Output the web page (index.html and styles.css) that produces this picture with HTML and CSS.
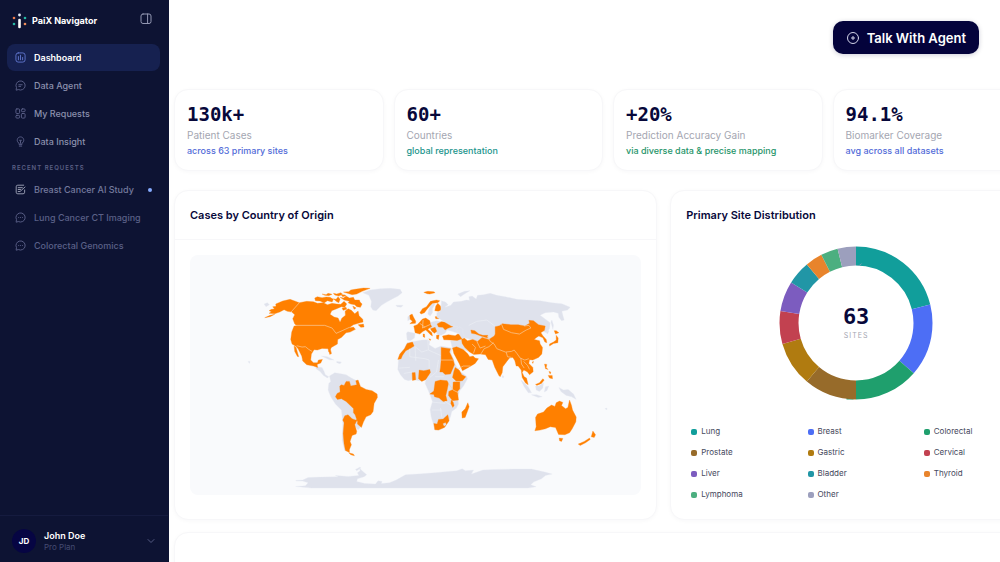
FILE: index.html
```html
<!DOCTYPE html>
<html lang="en">
<head>
<meta charset="utf-8">
<meta name="viewport" content="width=device-width, initial-scale=1">
<title>PaiX Navigator</title>
<link rel="stylesheet" href="styles.css">
</head>
<body>
<div class="app">
  <aside class="sidebar">
    <div class="brand">
      <svg class="brand-logo" viewBox="0 0 16 16" aria-hidden="true">
        <path d="M7.5 7v7" stroke="#fff" stroke-width="2.6" stroke-linecap="round"/>
        <circle cx="7.500" cy="2" r="1.400" fill="#e6f1ff"/>
        <circle cx="2" cy="5" r="1.300" fill="#ee7c4b"/>
        <circle cx="13" cy="5" r="1.300" fill="#25b8a5"/>
        <circle cx="2" cy="11" r="1.300" fill="#25b8a5"/>
        <circle cx="13" cy="11" r="1.300" fill="#ee8d5b"/>
      </svg>
      <span class="brand-name">PaiX Navigator</span>
      <button class="icon-button" type="button" aria-label="Collapse sidebar">
        <svg viewBox="0 0 12 12"><rect x="1" y="1" width="10" height="9.500" rx="2"/><path d="M7.600 1v9.500"/></svg>
      </button>
    </div>
    <nav class="nav" aria-label="Main">
      <a class="nav-item active" href="#dashboard">
        <svg viewBox="0 0 12 12"><rect x="1" y="1" width="10" height="10" rx="2.500"/><path d="M3.700 5v3.500M6 3.500v5M8.300 6v2.500"/></svg>Dashboard</a>
      <a class="nav-item" href="#agent">
        <svg viewBox="0 0 12 12"><path d="M1.300 10.700l.3-2.400A5 5 0 1 1 4 10.600zM4.200 5.200h3.600M4.200 7h2"/></svg>Data Agent</a>
      <a class="nav-item" href="#requests">
        <svg viewBox="0 0 12 12"><rect x="1" y="1" width="4" height="5" rx="1"/><rect x="7" y="1" width="4" height="3" rx="1"/><rect x="1" y="8" width="4" height="3" rx="1"/><rect x="7" y="6" width="4" height="5" rx="1"/></svg>My Requests</a>
      <a class="nav-item" href="#insight">
        <svg viewBox="0 0 12 12"><path d="M4.500 9V8C1 6 2.300 1 6 1s5 5 1.500 7v1zM4.700 11h2.600M6 8V5.500M5 4.700h2"/></svg>Data Insight</a>
    </nav>
    <h2 class="nav-heading">Recent Requests</h2>
    <nav class="nav recent" aria-label="Recent requests">
      <a class="nav-item current" href="#breast">
        <svg viewBox="0 0 12 12"><path d="M10.500 6.500V9A1.700 1.700 0 0 1 8.800 10.700H3A1.700 1.700 0 0 1 1.300 9V3A1.700 1.700 0 0 1 3 1.300h6.500M3.500 4h4.500M3.500 6h2.500M3.500 8.200h2L10.900 3.300"/></svg>Breast Cancer AI Study<span class="dot"></span></a>
      <a class="nav-item" href="#lung">
        <svg viewBox="0 0 12 12"><path d="M1.300 10.700l.3-2.400A5 5 0 1 1 4 10.600zM4 6h.1M6 6h.1M8 6h.1"/></svg>Lung Cancer CT Imaging</a>
      <a class="nav-item" href="#colorectal">
        <svg viewBox="0 0 12 12"><path d="M1.300 10.700l.3-2.400A5 5 0 1 1 4 10.600zM4 6h.1M6 6h.1M8 6h.1"/></svg>Colorectal Genomics</a>
    </nav>
    <button class="account" type="button">
      <span class="avatar">JD</span>
      <span class="account-text"><strong>John Doe</strong><span>Pro Plan</span></span>
      <svg viewBox="0 0 8 8" aria-hidden="true"><path d="M1 2.500l3 3 3-3"/></svg>
    </button>
  </aside>

  <main class="main">
    <header class="topbar">
      <button class="talk" type="button">
        <svg viewBox="0 0 14 14" aria-hidden="true"><circle cx="7" cy="7" r="5.500"/><path d="M7 5.400v3.200M5.400 7h3.200"/></svg>
        Talk With Agent
      </button>
    </header>
    <div class="content">
      <section class="stats" aria-label="Key figures">
        <article class="card stat"><strong>130k+</strong><span class="label">Patient Cases</span><span class="note blue">across 63 primary sites</span></article>
        <article class="card stat"><strong>60+</strong><span class="label">Countries</span><span class="note teal">global representation</span></article>
        <article class="card stat"><strong>+20%</strong><span class="label">Prediction Accuracy Gain</span><span class="note green">via diverse data &amp; precise mapping</span></article>
        <article class="card stat"><strong>94.1%</strong><span class="label">Biomarker Coverage</span><span class="note blue">avg across all datasets</span></article>
      </section>

      <div class="panels">
        <section class="card panel">
          <h2 class="panel-title ruled">Cases by Country of Origin</h2>
          <div class="map-frame">
          <svg class="map" viewBox="190 255 451 240" role="img" aria-label="World map of case origins">
            <!-- Americas -->
            <g transform="translate(240 280) scale(.33333)">
              <path class="land" d="M368 38L390 30L420 26L450 25L480 28L486 38L474 48L458 56L440 66L424 76L408 92L398 90L392 80L394 64L386 46ZM72 72L82 68L88 74L78 80ZM24 244L30 244L28 250ZM244 228L262 230L282 240L268 239ZM290 244L304 246L300 251L290 248Z"/>
              <path class="land" d="M228 260L246 262L252 274L256 284L266 290L262 294L250 286L240 274L228 266ZM268 288L284 278L298 280L318 284L334 294L350 302L356 320L340 370L350 400L356 412L350 424L362 440L354 450L344 438L334 460L322 514L314 512L306 480L308 430L304 390L286 372L272 350L264 330L266 310L272 304Z"/>
              <path class="case" d="M87 92L94 88L103 87L98 80L108 79L107 72L128 63L150 58L178 68L200 64L220 65L232 70L250 68L262 74L276 70L290 72L302 73L312 64L320 72L314 82L304 80L290 86L275 92L270 103L282 111L294 114L300 127L305 115L316 106L315 94L324 86L334 91L344 101L354 93L357 107L368 118L369 126L355 130L340 134L326 144L340 141L346 148L330 156L318 158L304 172L293 178L292 192L274 202L271 208L273 222L266 216L264 206L246 205L232 210L222 209L214 222L212 240L220 248L232 248L235 240L247 238L242 249L231 253L233 262L220 258L200 254L188 243L185 228L174 206L168 199L156 192L152 178L155 156L162 138L170 137L164 132L158 116L164 104L155 96L142 94L132 89L119 96L104 101L87 100L94 95ZM162 198L168 202L176 230L172 229L164 214ZM104 103L90 110L74 113L90 106ZM354 134L370 132L372 141L362 142ZM270 205L274 220L269 223L266 208Z"/>
              <path class="case" d="M224 54L232 50L246 53L258 51L270 52L280 58L276 66L262 62L252 69L240 63L226 62ZM246 42L258 44L264 40L276 43L266 47L254 46ZM280 56L288 58L294 50L300 58L296 68L288 64ZM300 52L310 54L318 48L328 54L340 52L344 60L358 60L360 66L366 72L361 82L350 80L344 74L332 72L324 68L328 64L312 60ZM280 40L290 42L302 38L308 43L296 48L284 45ZM304 46L312 44L318 47L308 50ZM310 36L326 35L332 30L344 28L370 24L390 25L366 34L350 42L336 44L322 40ZM306 84L318 82L320 88L309 91ZM338 78L348 84L342 88Z"/>
              <path class="case" d="M286 350L291 340L300 336L299 318L304 314L312 316L318 304L328 304L332 318L350 314L347 302L354 300L361 319L378 328L396 332L411 342L412 352L402 370L399 394L392 404L378 410L370 426L364 442L352 432L352 424L345 404L340 398L340 385L326 372L318 364L304 356L292 358ZM314 407L324 404L336 416L346 420L352 418L344 434L350 454L348 462L336 466L330 484L334 494L328 508L328 517L316 511L312 492L309 460L312 428L308 420ZM326 518L340 522L343 527L332 524Z"/>
              <path class="border" d="M178 68L153 96M166 136L254 136L276 144L288 160L306 152L328 142M170 197L186 201L196 200L206 208L216 214"/>
              <path class="land" d="M346 568L360 561L362 564L350 572Z"/>
            </g>
            <!-- Africa, Europe and the Middle East -->
            <g transform="translate(395 280) scale(.33333)">
              <path class="land" d="M36 188L56 184L80 180L98 179L104 184L102 194L120 205L138 198L170 204L168 220L180 252L192 272L214 288L217 296L205 318L194 332L188 350L190 372L184 384L170 394L166 410L160 424L150 440L132 450L118 449L116 436L108 410L105 388L112 364L104 342L96 324L90 310L92 300L72 302L54 298L40 302L28 298L16 284L8 268L10 240L22 216Z"/>
              <path class="land" d="M34 160L38 155L60 160L58 174L46 182L36 180ZM90 130L110 126L124 122L136 124L174 132L200 140L205 162L188 160L170 154L156 150L150 160L138 166L128 164L118 150L100 144ZM100 92L104 80L112 68L120 72L112 86L112 98L105 108L98 102ZM2 76L24 76L18 82L6 80ZM38 110L44 106L46 118L38 122ZM188 42L208 34L224 32L208 42L196 50ZM166 182L198 178L218 214L200 206L172 206Z"/>
              <path class="case" d="M86 37L98 34L116 35L120 38L104 42L96 41ZM74 98L82 86L94 80L106 64L124 60L134 62L128 68L112 70L104 78L94 90L88 98L78 102ZM122 78L128 70L136 78L139 90L130 94L119 92ZM120 110L132 108L132 116L122 116ZM44 106L51 102L55 111L62 124L61 130L44 131L52 124L45 118ZM56 138L66 134L74 126L82 117L92 114L104 122L106 133L110 140L104 143L98 148L110 158L112 168L106 164L96 154L92 150L84 154L74 162L60 158L58 148ZM106 146L120 142L125 154L118 160L110 154ZM126 132L138 125L154 126L172 132L173 140L158 145L150 150L143 142L130 141ZM84 162L88 162L89 172L84 170ZM101 176L107 178L105 181ZM124 166L132 165L130 178L124 175ZM142 168L160 164L180 167L188 162L200 164L202 176L186 181L166 180L146 179Z"/>
              <path class="case" d="M8 238L14 222L28 206L36 190L52 186L57 198L44 206L32 212L22 226L18 236ZM51 278L60 277L62 299L52 301ZM72 270L86 272L104 268L106 277L92 298L80 304L70 296ZM138 202L166 206L163 216L174 238L178 254L166 282L150 283L142 276L134 276L136 262L138 240ZM180 262L192 270L200 284L212 290L202 302L184 304L172 292L176 274ZM120 304L136 300L156 302L160 310L156 330L152 346L156 362L144 364L132 354L118 350L116 343L104 342L116 333ZM174 306L194 304L194 326L187 334L190 360L172 362L160 346L161 334L173 328ZM168 360L174 366L177 376L173 382L167 371ZM116 430L126 432L130 418L144 417L158 404L162 422L148 442L130 450L119 449ZM218 368L222 380L210 412L201 414L200 396L210 386ZM172 204L184 200L204 208L217 220L224 230L234 228L240 234L250 236L240 250L220 262L202 272L192 250L176 220Z"/>
              <path class="land" d="M144 431L151 428L153 434L147 438Z"/>
              <path class="border" d="M138 240L174 240M190 266L204 258L226 258M84 120L82 144L106 133M74 130L90 142M160 310L174 330L190 338M180 304L196 304"/>
              <path class="border pale" d="M60 200L80 216L98 210M98 180L100 210L136 226M44 206L44 230L60 232L90 236L102 240M60 200L62 242M102 240L102 266M12 264L44 262M130 240L124 276L104 292M120 290L146 290M110 366L150 370M110 390L140 390M136 384L140 412M150 364L168 376M26 280L50 276"/>
            </g>
            <!-- Asia and Oceania -->
            <g transform="translate(490 280) scale(.33333)">
              <path class="land" d="M-146 62L-134 66L-126 74L-136 82L-118 76L-110 66L-86 64L-72 60L-62 61L-64 50L-54 48L-42 57L-38 46L-20 44L0 40L20 46L45 50L80 58L110 60L150 62L185 68L215 71L240 82L232 90L215 94L218 106L222 120L214 122L206 112L204 100L190 96L165 98L150 106L166 118L180 128L178 146L168 158L150 150L0 200L-30 186L-66 176L-82 172L-84 152L-96 140L-116 138L-140 124L-160 112L-160 98L-148 92Z"/>
              <path class="case" d="M15 140L28 137L36 131L62 134L84 134L104 138L118 130L116 121L130 122L145 134L165 138L163 151L152 158L158 167L168 178L170 188L164 186L158 173L146 168L138 173L132 178L148 182L150 192L157 202L155 222L145 232L128 240L118 239L116 250L128 262L129 275L118 284L112 276L101 270L96 277L102 290L109 294L114 314L106 309L96 292L93 270L84 258L78 258L74 242L68 232L58 234L50 244L38 260L36 278L30 290L26 286L14 262L6 240L-6 238L-14 224L-30 222L-49 223L-62 216L-76 202L-84 190L-86 176L-78 174L-68 182L-52 178L-38 184L-24 172L-4 178L12 168L15 162ZM-58 150L-46 152L-34 162L-22 166L-7 166L-8 174L-28 168L-44 162L-56 160Z"/>
              <path class="case" d="M192 152L198 152L206 158L196 162ZM198 166L204 174L203 188L190 190L178 198L178 192L190 186L198 180ZM126 246L130 244L128 250ZM163 252L170 253L168 263L174 268L166 266ZM174 286L186 286L187 296L178 294ZM176 274L182 276L180 282ZM136 313L148 308L158 296L162 300L154 310L140 316ZM134 452L138 440L136 412L142 402L160 396L170 384L184 375L194 379L198 368L208 363L218 367L214 376L226 386L233 382L238 360L244 376L247 390L258 411L257 425L246 446L238 458L224 464L205 463L196 442L180 440L166 446L150 450ZM207 474L218 475L214 484L208 482ZM308 453L316 464L312 472L303 470ZM264 492L282 484L298 474L300 478L286 488L270 496Z"/>
              <path class="land" d="M-102 148L-92 140L-82 146L-82 160L-76 172L-84 176L-92 164ZM92 300L102 308L114 320L124 338L114 338L102 320ZM124 344L140 344L156 350L144 352ZM136 318L146 318L160 308L158 324L148 334L138 330ZM166 320L176 318L170 332L162 336ZM206 322L220 330L234 328L250 342L258 358L244 350L228 346L212 334ZM36 286L41 288L40 293L36 292ZM344 386L350 384L350 389ZM168 158L174 150L176 154L172 162ZM182 126L185 120L190 136L188 148Z"/>
              <path class="border" d="M34 132L40 148L64 158L88 162L108 150L122 144L116 136L102 138M0 184L12 192L20 206L46 216L64 214L72 210L80 220L90 234L104 240L116 236M92 234L94 252L102 264M100 244L112 256L118 268M-28 222L-18 206L-4 200L10 188M-50 220L-44 202L-54 192M-40 184L-30 204L-14 198M48 216L52 230L64 232M0 184L-8 168"/>
              <path class="border pale" d="M-64 136L-40 124L-10 120L14 138"/>
            </g>
            <!-- Antarctica -->
            <g transform="translate(168 440) scale(.33333)">
              <path class="land" d="M383 121L404 120L420 112L458 111L510 110L502 106L540 109L572 106L568 98L576 92L574 84L582 92L596 104L588 110L568 116L566 124L590 130L622 132L630 122L642 124L640 130L664 128L684 120L712 104L760 101L800 98L840 94L866 92L882 86L892 92L916 90L910 102L944 90L980 88L1034 87L1090 87L1130 96L1152 102L1132 106L1120 116L1096 126L1088 134L1104 140L1080 144L430 144L383 139L412 137L420 128L404 123L384 123Z"/>
            </g>
          </svg>
          </div>
        </section>

        <section class="card panel">
          <h2 class="panel-title">Primary Site Distribution</h2>
          <div class="donut">
            <svg viewBox="0 0 154 154" aria-hidden="true">
              <g transform="rotate(-90 77 77)" fill="none" stroke-width="19">
                <circle cx="77" cy="77" r="67" pathLength="360" stroke="#119e9b" stroke-dasharray="76 284"/>
                <circle cx="77" cy="77" r="67" pathLength="360" stroke="#4d6ef5" stroke-dasharray="55 305" stroke-dashoffset="-76"/>
                <circle cx="77" cy="77" r="67" pathLength="360" stroke="#1f9f6d" stroke-dasharray="49 311" stroke-dashoffset="-131"/>
                <circle cx="77" cy="77" r="67" pathLength="360" stroke="#976b2a" stroke-dasharray="40 320" stroke-dashoffset="-180"/>
                <circle cx="77" cy="77" r="67" pathLength="360" stroke="#b07b10" stroke-dasharray="34 326" stroke-dashoffset="-220"/>
                <circle cx="77" cy="77" r="67" pathLength="360" stroke="#c24150" stroke-dasharray="25 335" stroke-dashoffset="-254"/>
                <circle cx="77" cy="77" r="67" pathLength="360" stroke="#7c5cbf" stroke-dasharray="23 337" stroke-dashoffset="-279"/>
                <circle cx="77" cy="77" r="67" pathLength="360" stroke="#2196a6" stroke-dasharray="18 342" stroke-dashoffset="-302"/>
                <circle cx="77" cy="77" r="67" pathLength="360" stroke="#e8842c" stroke-dasharray="13 347" stroke-dashoffset="-320"/>
                <circle cx="77" cy="77" r="67" pathLength="360" stroke="#4caf80" stroke-dasharray="13 347" stroke-dashoffset="-333"/>
                <circle cx="77" cy="77" r="67" pathLength="360" stroke="#9c9fbd" stroke-dasharray="14 346" stroke-dashoffset="-346"/>
              </g>
            </svg>
            <div class="donut-text"><strong>63</strong><span>SITES</span></div>
          </div>
          <ul class="legend">
            <li class="c-lung">Lung</li><li class="c-breast">Breast</li><li class="c-colorectal">Colorectal</li>
            <li class="c-prostate">Prostate</li><li class="c-gastric">Gastric</li><li class="c-cervical">Cervical</li>
            <li class="c-liver">Liver</li><li class="c-bladder">Bladder</li><li class="c-thyroid">Thyroid</li>
            <li class="c-lymphoma">Lymphoma</li><li class="c-other">Other</li>
          </ul>
        </section>
      </div>
      <section class="card next-panel" aria-label="More"></section>
    </div>
  </main>
</div>
</body>
</html>
```
FILE: styles.css
```css
* { box-sizing: border-box; margin: 0; }
body { font-family: Inter, "Liberation Sans", sans-serif; font-size: 10px; color: #07083a; background: #fff; }
button { font: inherit; border: 0; background: none; color: inherit; padding: 0; }
.app { display: flex; height: 100vh; overflow: hidden; }

.sidebar { flex: 0 0 168px; display: flex; flex-direction: column; background: #0d1333; color: #7f84a4; border-right: 1px solid #0d1333; box-sizing: content-box; width: 168px; margin-right: -1px; }
.sidebar svg { fill: none; stroke: currentColor; stroke-linecap: round; stroke-linejoin: round; }
.brand { display: flex; align-items: center; height: 41px; padding: 0 16px 0 12px; }
.brand .brand-logo { width: 16px; height: 16px; stroke: none; }
.brand-name { flex: 1; margin-left: 4px; font-size: 9px; font-weight: 700; color: #fff; }
.icon-button { width: 12px; height: 12px; margin-bottom: 4px; color: #9297b2; }
.icon-button svg { display: block; width: 12px; height: 12px; }
.nav { display: flex; flex-direction: column; gap: 1px; padding: 3px 8px 0 7px; }
.nav-item { display: flex; align-items: center; height: 27px; padding: 0 8px; gap: 8px; border-radius: 8px; font-size: 9px; font-weight: 500; color: #8b90ad; text-decoration: none; white-space: nowrap; }
.nav-item svg { width: 11px; height: 11px; color: #5d638b; }
.nav-item.active { background: #162150; color: #fff; font-weight: 600; }
.nav-item.active svg { color: #6177cf; }
.nav-heading { padding: 8px 12px 0; font-size: 6px; line-height: 9px; font-weight: 600; letter-spacing: 1px; text-transform: uppercase; color: #5b6085; }
.recent { padding-top: 4px; }
.recent .nav-item { color: #5a6087; }
.recent .current { color: #747a9d; }
.recent .current svg { color: #a0a4b9; }
.dot { width: 4px; height: 4px; margin-left: auto; border-radius: 50%; background: #85abff; }
.account { display: flex; align-items: center; gap: 8px; height: 47px; margin-top: auto; padding: 4px 13px 0 12px; border-top: 1px solid #151b3f; text-align: left; }
.avatar { display: grid; place-items: center; width: 24px; height: 24px; border-radius: 50%; background: #060543; color: #fff; font-size: 8px; font-weight: 700; }
.account-text { flex: 1; display: grid; font-size: 8px; line-height: 11px; color: #454b72; }
.account-text strong { font-size: 9px; line-height: 12px; font-weight: 600; color: #fff; }
.account svg { width: 8px; height: 8px; color: #555b82; }

.main { flex: 1; min-width: 0; overflow: hidden; }
.topbar { display: flex; justify-content: flex-end; padding: 21px 21px 35px; }
.talk { display: flex; align-items: center; gap: 7px; height: 33px; padding: 0 13px; border-radius: 10px; background: #04033b; color: #fff; font-size: 13px; font-weight: 600; box-shadow: 0 1px 5px #04033b33; }
.talk svg { width: 14px; height: 14px; fill: none; stroke: #d2d3e8; stroke-linecap: round; }
.content { min-width: 874px; padding-left: 6px; }
.card { background: #fff; border: 1px solid #f7f7f9; border-radius: 14px; box-shadow: 0 1px 4px #14183008; }
.stats { display: grid; grid-template-columns: repeat(4, 1fr); gap: 10px; }
.stat { display: flex; flex-direction: column; height: 82px; padding: 13px 12px 0; }
.stat strong { font: 700 19px/22px "DejaVu Sans Mono", monospace; }
.label { margin-top: 3px; font-size: 10px; line-height: 15px; color: #a4a6b1; }
.note { margin-top: 1px; font-size: 9px; line-height: 14px; font-weight: 500; }
.blue { color: #526bd8; }
.teal { color: #21948c; }
.green { color: #269469; }

.panels { display: grid; grid-template-columns: 13fr 10fr; gap: 13px; margin: 19px 0 12px; }
.panel-title { padding: 16px 15px; font-size: 11px; line-height: 16px; font-weight: 600; }
.ruled { border-bottom: 1px solid #f7f7f9; }
.map-frame { margin: 15px 15px 24px; border-radius: 8px; background: #f9fafc; }
.map { display: block; width: 100%; }
.land { fill: #dfe2ec; stroke: #e8eaf2; stroke-width: 1; }
.case { fill: #ff8000; stroke: #ff8a18; stroke-width: 1; stroke-linejoin: round; }
.border { fill: none; stroke: #f7cfa5; stroke-width: 2; }
.pale { stroke: #eceef4; }
.donut { display: grid; place-items: center; margin-top: 7px; }
.donut > * { grid-area: 1 / 1; }
.donut svg { width: 154px; height: 154px; }
.donut-text { display: grid; justify-items: center; }
.donut-text strong { font: 700 22px/26px "DejaVu Sans Mono", monospace; }
.donut-text span { font-size: 7px; line-height: 12px; letter-spacing: 1px; color: #a4a6b1; }
.legend { display: grid; grid-template-columns: repeat(3, 1fr); gap: 6px 9px; margin: 24px 15px 16px; padding: 0; list-style: none; }
.legend li { display: flex; align-items: center; gap: 4px; padding-left: 5px; font-size: 8px; line-height: 15px; color: #45485c; }
.legend li::before { content: ""; width: 6px; height: 6px; border-radius: 2px; background: var(--c); }
.c-lung { --c: #119e9b; }
.c-breast { --c: #4d6ef5; }
.c-colorectal { --c: #1f9f6d; }
.c-prostate { --c: #976b2a; }
.c-gastric { --c: #b07b10; }
.c-cervical { --c: #c24150; }
.c-liver { --c: #7c5cbf; }
.c-bladder { --c: #2196a6; }
.c-thyroid { --c: #e8842c; }
.c-lymphoma { --c: #4caf80; }
.c-other { --c: #9c9fbd; }
.next-panel { height: 80px; }
```
